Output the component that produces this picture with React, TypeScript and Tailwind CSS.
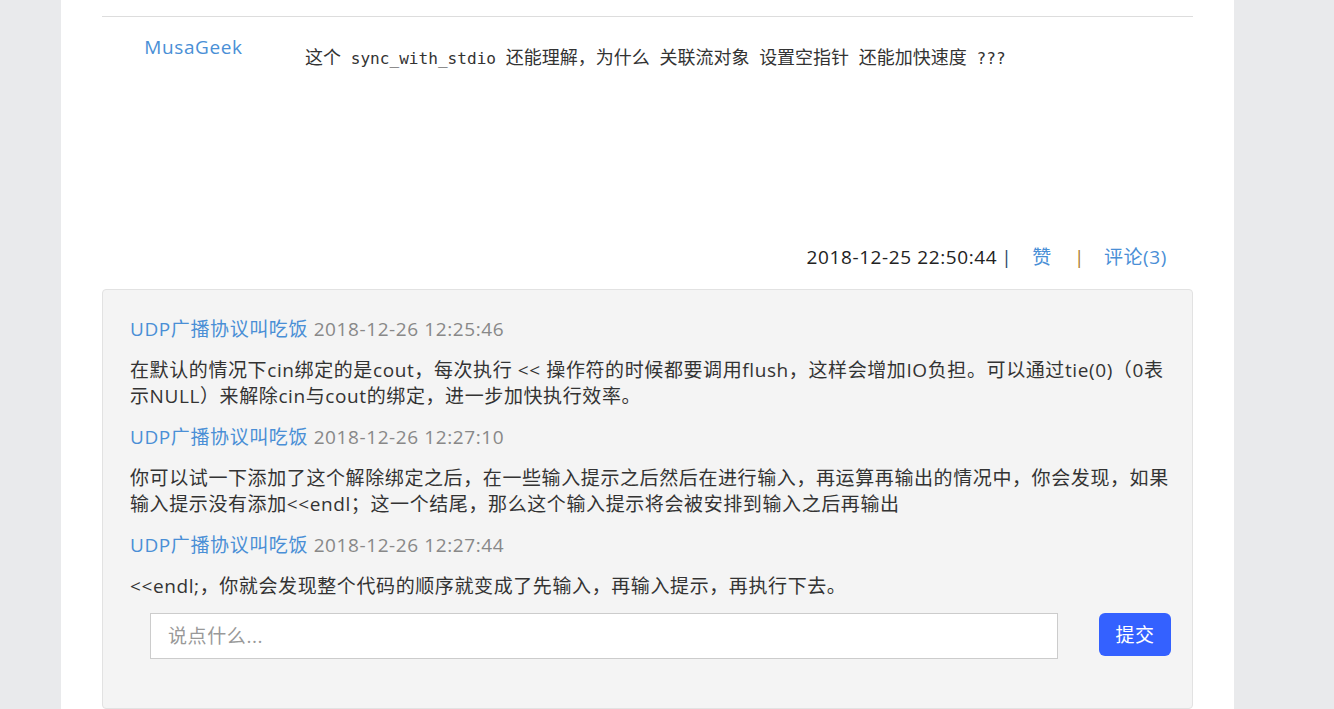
import React from "react";

const sans = "font-['Open_Sans','Noto_Sans_CJK_SC',sans-serif]";
const mono = "font-['DejaVu_Sans_Mono',monospace] text-[16.1px]";
const body = "text-[19px] tracking-[0.6px] leading-[26px]";

const replies = [
  {
    user: "UDP广播协议叫吃饭",
    time: "2018-12-26 12:25:46",
    text: "在默认的情况下cin绑定的是cout，每次执行 << 操作符的时候都要调用flush，这样会增加IO负担。可以通过tie(0)（0表示NULL）来解除cin与cout的绑定，进一步加快执行效率。",
  },
  {
    user: "UDP广播协议叫吃饭",
    time: "2018-12-26 12:27:10",
    text: "你可以试一下添加了这个解除绑定之后，在一些输入提示之后然后在进行输入，再运算再输出的情况中，你会发现，如果输入提示没有添加<<endl；这一个结尾，那么这个输入提示将会被安排到输入之后再输出",
  },
  {
    user: "UDP广播协议叫吃饭",
    time: "2018-12-26 12:27:44",
    text: "<<endl;，你就会发现整个代码的顺序就变成了先输入，再输入提示，再执行下去。",
  },
];

export default function App() {
  return (
    <div className={`min-h-screen bg-[#e9eaec] ${sans}`}>
      <div className="ml-[61px] w-[1173px] min-h-[709px] bg-white px-[41px] pt-4">
        <div className="border-t border-[#dddddd]">
          <div className="flex h-[220px]">
            <div className={`w-[183px] pt-[17px] text-center text-[#4a8fd6] ${body}`}>
              MusaGeek
            </div>
            <div className="ml-[20px] pt-[27px] font-['Noto_Sans_CJK_SC',sans-serif] text-[18px] leading-[24px] text-[#333]">
              这个<span className={mono}> sync_with_stdio </span>还能理解，为什么
              <span className={mono}> </span>关联流对象<span className={mono}> </span>设置空指针
              <span className={mono}> </span>还能加快速度<span className={mono}> ???</span>
            </div>
          </div>
          <div className={`mb-[12px] flex h-[40px] items-center justify-end pr-[26px] ${body}`}>
            <span className="text-[#222]">2018-12-25 22:50:44</span>
            <span className="ml-[4px] text-[#2c4a6c]">|</span>
            <span className="ml-[20px] text-[#4a8fd6]">赞</span>
            <span className="ml-[22px] text-[#a97a2e]">|</span>
            <span className="ml-[19px] text-[#4a8fd6]">评论(3)</span>
          </div>
          <div className={`h-[420px] rounded-[4px] border border-[#e2e2e2] bg-[#f4f4f4] pl-[27px] pr-[14px] pt-[26px] ${body}`}>
            {replies.map((r, i) => (
              <div key={i} className="mb-[15px]">
                <div className="mb-[15px]">
                  <span className="text-[#4a8fd6]">{r.user}</span>{" "}
                  <span className="text-[#888]">{r.time}</span>
                </div>
                <div className="text-[#333]">{r.text}</div>
              </div>
            ))}
            <div className="-mt-px flex items-start pl-[20px]">
              <input
                placeholder="说点什么..."
                className="h-[46px] w-[908px] shrink-0 border border-[#cccccc] bg-white px-[17px] text-[19px] tracking-[0.6px] text-[#333] outline-none placeholder:text-[#999]"
              />
              <button className="ml-[41px] h-[43px] w-[72px] shrink-0 rounded-[6px] bg-[#3461ff] text-[19px] tracking-[0.6px] text-white">
                提交
              </button>
            </div>
          </div>
        </div>
      </div>
    </div>
  );
}
